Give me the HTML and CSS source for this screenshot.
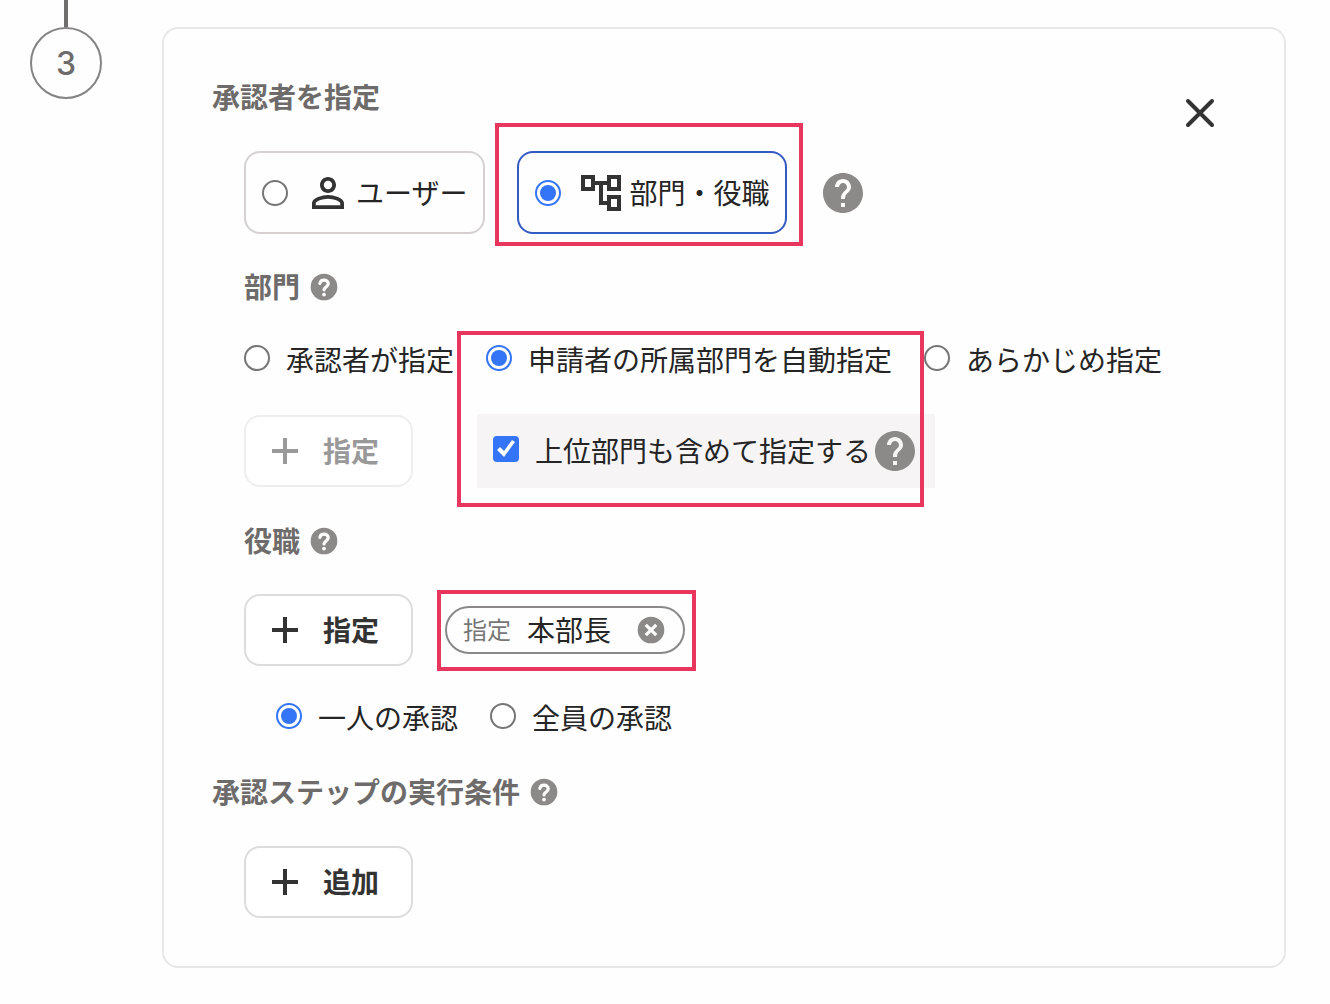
FILE: index.html
```html
<!DOCTYPE html>
<html lang="ja">
<head>
  <meta charset="UTF-8">
  <meta name="viewport" content="width=device-width, initial-scale=1.0">
  <title>承認者を指定</title>
  <link rel="stylesheet" href="styles.css">
</head>
<body>
  <!-- shared icons -->
  <svg width="0" height="0" class="icon-defs">
    <symbol id="help" viewBox="0 0 24 24">
      <path d="M12 2C6.48 2 2 6.48 2 12s4.48 10 10 10 10-4.48 10-10S17.52 2 12 2zm1 17h-2v-2h2v2zm2.07-7.75l-.9.92C13.45 12.9 13 13.5 13 15h-2v-.5c0-1.1.45-2.1 1.17-2.83l1.24-1.26c.37-.36.59-.86.59-1.41 0-1.1-.9-2-2-2s-2 .9-2 2H8c0-2.21 1.79-4 4-4s4 1.79 4 4c0 .88-.36 1.68-.93 2.25z"/>
    </symbol>
    <symbol id="help-small" viewBox="0 0 24 24">
      <circle cx="12" cy="12" r="10"/>
      <path d="M8.900 9.300C9.300 7.700 10.500 6.900 12 6.900c1.900 0 3.200 1.100 3.200 2.700 0 2.300-3.100 2.400-3.200 4.500" fill="none" stroke="#fff" stroke-width="2.400" stroke-linecap="round"/>
      <circle cx="12" cy="17.700" r="1.400" fill="#fff"/>
    </symbol>
    <symbol id="plus" viewBox="0 0 26 26">
      <path d="M13 0v26M0 13h26" stroke="currentColor" stroke-width="4"/>
    </symbol>
  </svg>

  <div class="step">
    <div class="step-marker">
      <div class="step-line"></div>
      <div class="step-number">3</div>
    </div>

    <main class="card">
      <div class="card-body">
        <h2>承認者を指定</h2>

        <div class="options indent">
          <label class="option">
            <input type="radio" name="approver">
            <svg class="icon" viewBox="0 0 24 24"><path d="M12 5.900a2.100 2.100 0 1 1 0 4.200 2.100 2.100 0 0 1 0-4.200m0 9c2.970 0 6.100 1.460 6.100 2.100v1.100H5.900V17c0-.640 3.130-2.100 6.100-2.100M12 4C9.790 4 8 5.790 8 8s1.790 4 4 4 4-1.790 4-4-1.790-4-4-4zm0 9c-2.670 0-8 1.340-8 4v3h16v-3c0-2.660-5.330-4-8-4z"/></svg>
            ユーザー
          </label>
          <label class="option selected highlight">
            <input type="radio" name="approver" checked>
            <svg class="icon" viewBox="0 0 24 24"><path d="M22 11V3h-7v3H9V3H2v8h7V8h2v10h4v3h7v-8h-7v3h-2V8h2v3h7zM7 9H4V5h3v4zm10 6h3v4h-3v-4zm0-10h3v4h-3V5z"/></svg>
            部門・役職
          </label>
          <button type="button" class="help" aria-label="ヘルプ"><svg class="icon"><use href="#help"/></svg></button>
        </div>

        <h3 class="indent">部門 <button type="button" class="help" aria-label="ヘルプ"><svg class="icon-small"><use href="#help-small"/></svg></button></h3>

        <div class="department indent">
          <div class="choices">
            <label><input type="radio" name="department">承認者が指定</label>
            <label><input type="radio" name="department" checked>申請者の所属部門を自動指定</label>
            <label><input type="radio" name="department">あらかじめ指定</label>
          </div>
          <div class="department-detail">
            <button type="button" class="add-button" disabled><svg class="plus"><use href="#plus"/></svg>指定</button>
            <div class="panel">
              <label><input type="checkbox" checked>上位部門も含めて指定する</label>
              <button type="button" class="help" aria-label="ヘルプ"><svg class="icon"><use href="#help"/></svg></button>
            </div>
          </div>
        </div>

        <h3 class="indent">役職 <button type="button" class="help" aria-label="ヘルプ"><svg class="icon-small"><use href="#help-small"/></svg></button></h3>

        <div class="position indent">
          <div class="position-row">
            <button type="button" class="add-button"><svg class="plus"><use href="#plus"/></svg>指定</button>
            <div class="chip highlight">
              <span class="chip-type">指定</span>
              <span class="chip-name">本部長</span>
              <button type="button" class="help" aria-label="削除">
                <svg class="icon-small" viewBox="0 0 24 24"><circle cx="12" cy="12" r="10"/><path d="M8.100 8.100l7.800 7.800M15.900 8.100l-7.800 7.800" stroke="#fff" stroke-width="2.400"/></svg>
              </button>
            </div>
          </div>
          <div class="choices indent">
            <label><input type="radio" name="approval" checked>一人の承認</label>
            <label><input type="radio" name="approval">全員の承認</label>
          </div>
        </div>

        <h2>承認ステップの実行条件 <button type="button" class="help" aria-label="ヘルプ"><svg class="icon-small"><use href="#help-small"/></svg></button></h2>

        <div class="indent">
          <button type="button" class="add-button"><svg class="plus"><use href="#plus"/></svg>追加</button>
        </div>
      </div>

      <button type="button" class="close" aria-label="閉じる">
        <svg class="icon" viewBox="0 0 48 48"><path d="M12 12l24 24M36 12L12 36" stroke="#333" stroke-width="4" stroke-linecap="round"/></svg>
      </button>
    </main>
  </div>
</body>
</html>
```
FILE: styles.css
```css
*,
*::before,
*::after {
  box-sizing: border-box;
}
body {
  margin: 0;
  background-color: #fefefe;
  color: #252525;
  font-family: "Noto Sans", "Noto Sans CJK JP", sans-serif;
  font-size: 28px;
  line-height: 40px;
}
button {
  font: inherit;
  cursor: pointer;
}
svg {
  display: block;
  flex-shrink: 0;
}
.icon-defs {
  position: absolute;
}
.icon {
  width: 48px;
  height: 48px;
  fill: #333;
}
.icon-small {
  width: 32px;
  height: 32px;
}
.step {
  display: flex;
  gap: 60px;
  padding: 0 44px 36px 30px;
}
.step-marker {
  width: 72px;
  flex-shrink: 0;
}
.step-line {
  width: 4px;
  height: 27px;
  margin: 0 auto;
  background-color: #716e6e;
}
.step-number {
  height: 72px;
  border: 2px solid #858383;
  border-radius: 50%;
  color: #6e6b6b;
  font-family: Inter, sans-serif;
  font-size: 32px;
  font-weight: 500;
  line-height: 70px;
  text-align: center;
}
.card {
  display: flex;
  align-items: flex-start;
  flex: 1;
  margin-top: 27px;
  padding: 47px 60px 48px 48px;
  border: 2px solid #e7e7e7;
  border-radius: 16px;
}
.card-body {
  display: flex;
  flex-direction: column;
  gap: 33px;
  flex: 1;
}
.indent {
  margin-left: 32px;
}
h2,
h3 {
  display: flex;
  align-items: center;
  gap: 8px;
  margin-top: 0;
  margin-bottom: 0;
  color: #6e6b6b;
  font-size: 28px;
  font-weight: bold;
}
h2 {
  line-height: 42px;
}
.help,
.close {
  padding: 0;
  border: none;
  background: none;
}
.help svg {
  fill: #8c8989;
}
.close {
  margin-top: 13px;
}
label {
  display: flex;
  align-items: center;
  white-space: nowrap;
}
input {
  appearance: none;
  display: grid;
  place-items: center;
  flex-shrink: 0;
  width: 26px;
  height: 26px;
  margin: 0 16px 0 0;
}
input[type="radio"] {
  border: 2px solid #767676;
  border-radius: 50%;
  background-color: #fff;
}
input[type="radio"]:checked {
  border-color: #3375f6;
}
input[type="radio"]:checked::before {
  content: "";
  width: 16px;
  height: 16px;
  border-radius: 50%;
  background-color: #3375f6;
}
input[type="checkbox"] {
  border-radius: 4px;
  background-color: #3375f6;
}
input[type="checkbox"]:checked::before {
  content: "";
  width: 26px;
  height: 26px;
  background-color: #fff;
  clip-path: polygon(4px 14px, 7px 11px, 11px 15px, 19px 4px, 22px 6px, 11px 21px);
}
.options {
  display: flex;
  align-items: center;
  gap: 32px;
}
.option {
  height: 83px;
  padding: 0 16px;
  border: 2px solid #d5d1d1;
  border-radius: 16px;
}
.option .icon {
  margin-right: 4px;
}
.option.selected {
  border-color: #335bc4;
}
.choices {
  display: flex;
  gap: 32px;
}
.choices input,
.panel input {
  margin-bottom: 4px;
}
.department {
  display: flex;
  flex-direction: column;
  gap: 34px;
  position: relative;
}
.department-detail {
  display: flex;
  align-items: center;
  gap: 64px;
}
.panel {
  display: flex;
  align-items: center;
  height: 74px;
  padding: 0 16px;
  background-color: #f6f4f5;
}
.add-button {
  display: flex;
  align-items: center;
  gap: 25px;
  height: 72px;
  padding: 0 32px 0 26px;
  border: 2px solid #dcdcdc;
  border-radius: 16px;
  background-color: #fff;
  color: #333;
  font-weight: bold;
}
.add-button:disabled {
  border-color: #eee;
  color: #999;
}
.plus {
  width: 26px;
  height: 26px;
}
.position {
  display: flex;
  flex-direction: column;
  gap: 32px;
}
.position-row {
  display: flex;
  align-items: center;
  gap: 32px;
}
.chip {
  display: flex;
  align-items: center;
  height: 48px;
  padding: 0 16px;
  border: 2px solid #8a8888;
  border-radius: 24px;
}
.chip-type {
  margin-right: 16px;
  color: #767676;
  font-size: 24px;
}
.chip-name {
  margin-right: 24px;
}

/* red frames drawn over the settings */
.highlight {
  position: relative;
}
.highlight::after,
.department::after {
  content: "";
  position: absolute;
  border: 4px solid #e8365f;
  pointer-events: none;
}
.option.highlight::after {
  inset: -30px -18px -14px -24px;
}
.department::after {
  top: -9px;
  left: 213px;
  width: 467px;
  height: 176px;
}
.chip.highlight::after {
  inset: -18px -13px -19px -10px;
}
```
